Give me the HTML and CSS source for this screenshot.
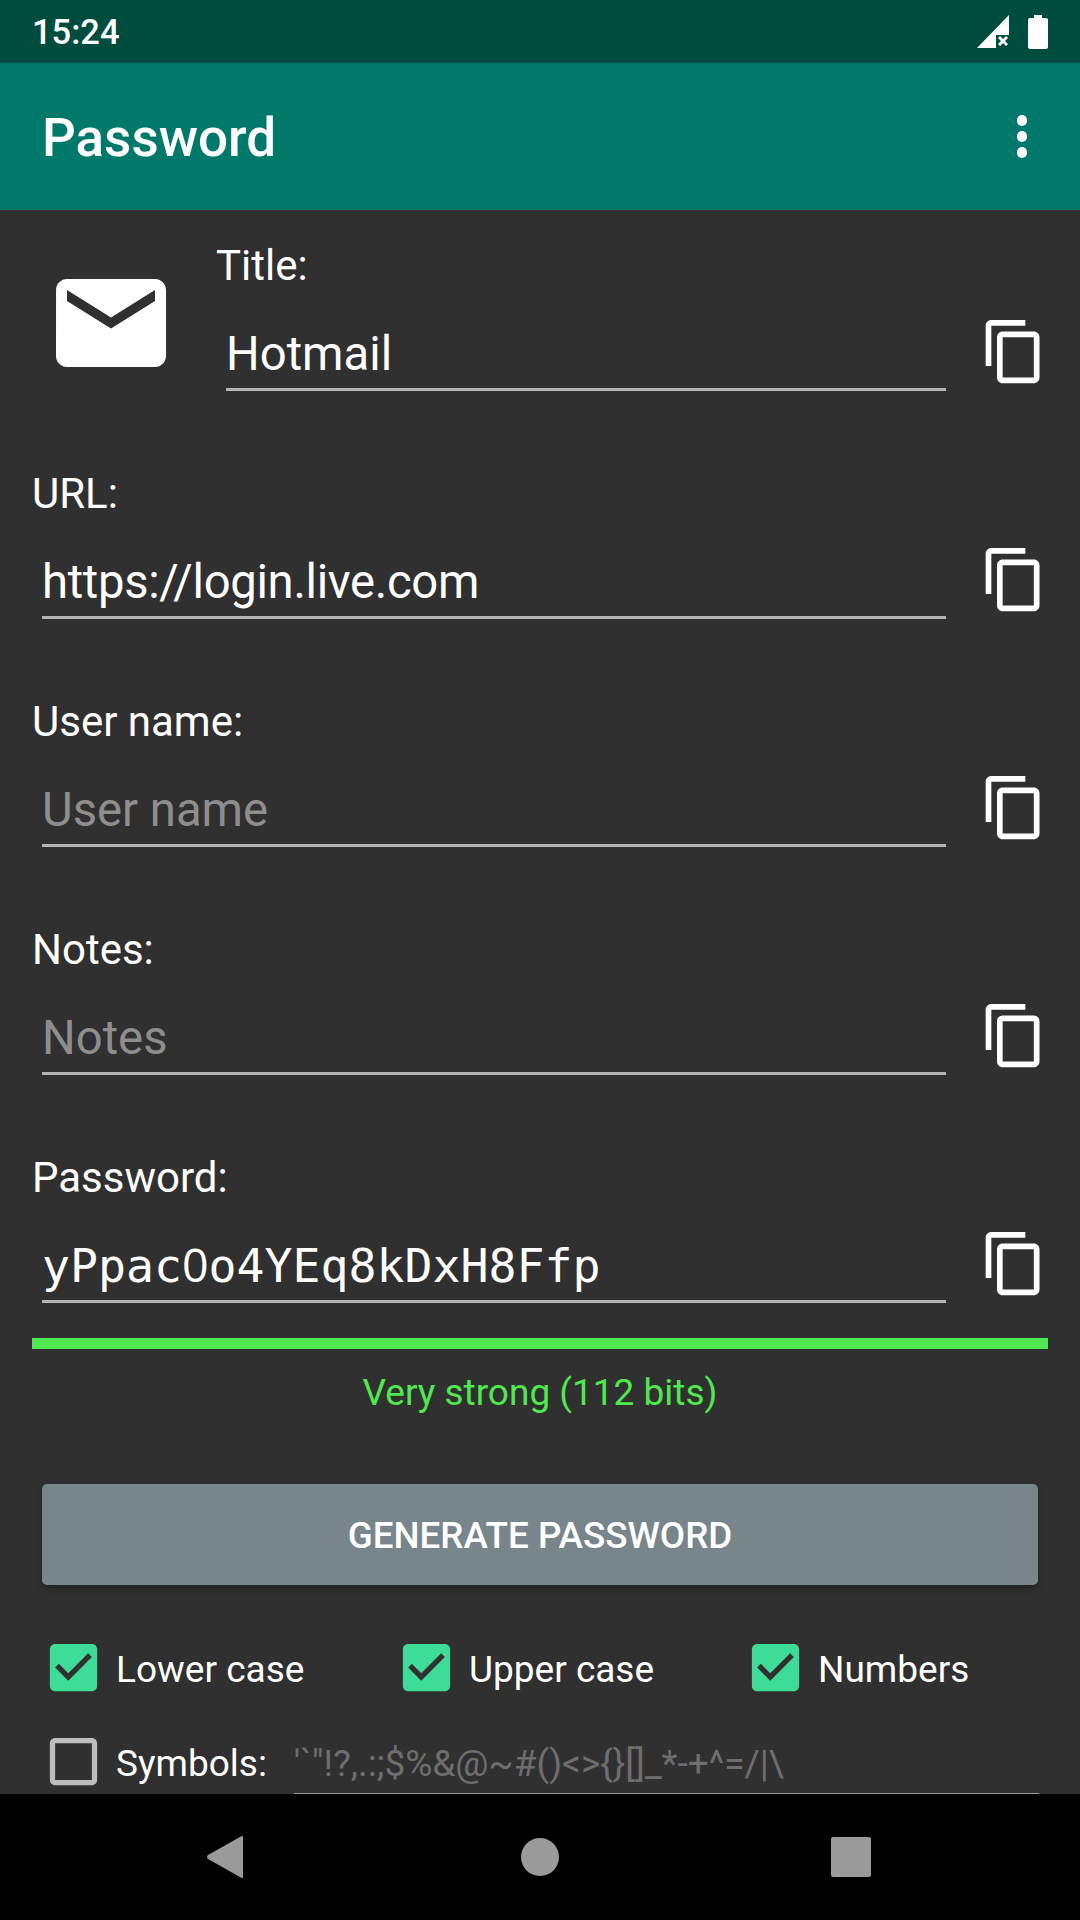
FILE: index.html
```html
<!DOCTYPE html>
<html lang="en">
<head>
    <meta charset="UTF-8">
    <meta name="viewport" content="width=device-width, initial-scale=1.0">
    <title>Password</title>
    <link rel="stylesheet" href="styles.css">
</head>
<body>
    <svg class="icon-defs" width="0" height="0">
        <symbol id="copy" viewBox="0 0 24 24" preserveAspectRatio="none">
            <path d="M16 1H4c-1.1 0-2 .9-2 2v14h2V3h12V1zm3 4H8c-1.1 0-2 .9-2 2v14c0 1.1.9 2 2 2h11c1.1 0 2-.9 2-2V7c0-1.1-.9-2-2-2zm0 16H8V7h11v14z"/>
        </symbol>
        <symbol id="checked" viewBox="0 0 24 24">
            <path d="M19 3H5c-1.11 0-2 .9-2 2v14c0 1.1.89 2 2 2h14c1.11 0 2-.9 2-2V5c0-1.11-.89-2-2-2zm-9 14l-5-5 1.41-1.41L10 14.17l7.59-7.59L19 8l-9 9z"/>
        </symbol>
        <symbol id="unchecked" viewBox="0 0 24 24">
            <path d="M19 5v14H5V5h14m0-2H5c-1.1 0-2 .9-2 2v14c0 1.1.9 2 2 2h14c1.1 0 2-.9 2-2V5c0-1.1-.9-2-2-2z"/>
        </symbol>
    </svg>

    <div class="status-bar">
        <span class="status-time">15:24</span>
        <div class="status-icons">
            <svg class="signal-icon" viewBox="0 0 32 33">
                <path d="M32 0V20H19V33H0z"/>
                <path d="M21 23l2-2 3 3 3-3 2 2-3 3 3 3-2 2-3-3-3 3-2-2 3-3z"/>
            </svg>
            <svg class="battery-icon" viewBox="0 0 20 34">
                <path d="M6 0h8v3h4c1.1 0 2 .9 2 2v27c0 1.1-.9 2-2 2H2c-1.1 0-2-.9-2-2V5c0-1.1.9-2 2-2h4z"/>
            </svg>
        </div>
    </div>

    <div class="app-bar">
        <h1>Password</h1>
        <div class="overflow-menu">
            <span></span>
            <span></span>
            <span></span>
        </div>
    </div>

    <div class="content">
        <div class="title-row">
            <svg class="mail-icon" viewBox="0 0 24 24">
                <path d="M20 4H4c-1.1 0-1.99.9-1.99 2L2 18c0 1.1.9 2 2 2h16c1.1 0 2-.9 2-2V6c0-1.1-.9-2-2-2zm0 4l-8 5-8-5V6l8 5 8-5v2z"/>
            </svg>
            <div class="field">
                <div class="field-label">Title:</div>
                <div class="field-body">
                    <div class="field-input">Hotmail</div>
                    <svg class="copy-icon"><use href="#copy"/></svg>
                </div>
            </div>
        </div>

        <div class="field">
            <div class="field-label">URL:</div>
            <div class="field-body">
                <div class="field-input url">https://login.live.com</div>
                <svg class="copy-icon"><use href="#copy"/></svg>
            </div>
        </div>

        <div class="field">
            <div class="field-label">User name:</div>
            <div class="field-body">
                <div class="field-input empty">User name</div>
                <svg class="copy-icon"><use href="#copy"/></svg>
            </div>
        </div>

        <div class="field">
            <div class="field-label">Notes:</div>
            <div class="field-body">
                <div class="field-input empty">Notes</div>
                <svg class="copy-icon"><use href="#copy"/></svg>
            </div>
        </div>

        <div class="field password-field">
            <div class="field-label">Password:</div>
            <div class="field-body">
                <div class="field-input mono">yPpac<span class="plain-zero">0</span>o4YEq8kDxH8Ffp</div>
                <svg class="copy-icon"><use href="#copy"/></svg>
            </div>
        </div>

        <div class="strength-bar"></div>
        <div class="strength-text">Very strong (112 bits)</div>

        <button class="generate-btn">GENERATE PASSWORD</button>

        <div class="options">
            <div class="option">
                <svg class="check-icon on"><use href="#checked"/></svg>
                <span>Lower case</span>
            </div>
            <div class="option">
                <svg class="check-icon on"><use href="#checked"/></svg>
                <span>Upper case</span>
            </div>
            <div class="option">
                <svg class="check-icon on"><use href="#checked"/></svg>
                <span>Numbers</span>
            </div>
        </div>

        <div class="symbols-row">
            <div class="option">
                <svg class="check-icon off"><use href="#unchecked"/></svg>
                <span>Symbols:</span>
            </div>
            <div class="symbols-input">'`"!?,.:;$%&amp;@~#()&lt;&gt;{}[]_*-+^=/|\</div>
        </div>
    </div>

    <div class="nav-bar">
        <svg class="nav-back" viewBox="0 0 36 42">
            <path d="M35 0c.6 0 1 .4 1 1v40c0 .6-.4 1-1 1-.3 0-.5-.1-.7-.3L1 23c-1.300-1-1.300-3 0-4L34.300.3c.2-.2.4-.3.7-.3z"/>
        </svg>
        <div class="nav-home"></div>
        <div class="nav-recent"></div>
    </div>
</body>
</html>
```

FILE: styles.css
```css
html, body {
    margin: 0;
    padding: 0;
}
body {
    width: 1080px;
    height: 1920px;
    display: flex;
    flex-direction: column;
    overflow: hidden;
    font-family: Roboto, "Liberation Sans", sans-serif;
    color: white;
    background: #303030;
}
.icon-defs {
    position: absolute;
}
.status-bar {
    height: 63px;
    flex: none;
    display: flex;
    justify-content: space-between;
    align-items: center;
    padding: 0 32px;
    background: #004d40;
}
.status-time {
    font-size: 34.5px;
    font-weight: 500;
}
.status-icons {
    display: flex;
    align-items: center;
    gap: 19px;
}
.signal-icon {
    width: 32px;
    height: 33px;
    fill: white;
}
.battery-icon {
    width: 20px;
    height: 34px;
    fill: white;
}
.app-bar {
    height: 147px;
    flex: none;
    display: flex;
    justify-content: space-between;
    align-items: center;
    padding: 2px 53px 0 42px;
    box-sizing: border-box;
    background: #00796b;
}
.app-bar h1 {
    margin: 0;
    font-size: 53px;
    font-weight: 500;
}
.overflow-menu {
    display: flex;
    flex-direction: column;
    gap: 5.5px;
    margin-top: -2px;
}
.overflow-menu span {
    width: 10.500px;
    height: 10.500px;
    border-radius: 50%;
    background: white;
}
.content {
    flex: 1;
    min-height: 0;
    overflow: hidden;
    padding: 35px 32px 0;
}
.title-row {
    display: flex;
}
.mail-icon {
    width: 132px;
    height: 132px;
    flex: none;
    margin: 12px 39px 0 13px;
    fill: white;
}
.title-row .field {
    flex: 1;
    min-width: 0;
}
.field {
    margin-bottom: 82px;
}
.field-label {
    height: 44px;
    font-size: 42px;
    line-height: 42px;
}
.field-body {
    display: flex;
    align-items: flex-end;
    height: 102px;
}
.field-input {
    flex: 1;
    min-width: 0;
    margin-left: 10px;
    padding-bottom: 6px;
    font-size: 47.25px;
    line-height: 56px;
    border-bottom: 3px solid #b4b4b4;
}
.field-input.url {
    letter-spacing: -0.33px;
}
.field-input.empty {
    color: #8e8e8e;
}
.field-input.mono {
    font-family: "DejaVu Sans Mono", "Liberation Mono", monospace;
    font-size: 46.5px;
}
/* droid mono has an open zero, dejavu doesn't */
.plain-zero {
    display: inline-block;
    width: 1ch;
    text-align: center;
    font-family: "Open Sans", sans-serif;
}
.copy-icon {
    width: 68px;
    height: 69px;
    flex: none;
    margin: 0 0 5px 34px;
    fill: white;
}
.password-field {
    margin-bottom: 35px;
}
.strength-bar {
    height: 11px;
    background: #50e850;
}
.strength-text {
    margin-top: 22px;
    font-size: 37px;
    line-height: 44px;
    text-align: center;
    color: #50e850;
}
.generate-btn {
    display: block;
    width: 996px;
    height: 101px;
    margin: 69px 0 0 10px;
    padding: 2px 0 0;
    border: none;
    border-radius: 5px;
    font-family: inherit;
    font-size: 36.75px;
    font-weight: 500;
    color: white;
    background: #78858a;
    box-shadow: 0 3px 6px rgba(0, 0, 0, 0.3);
}
.options {
    display: grid;
    grid-template-columns: 353px 349px 1fr;
    margin: 51px 0 0 10px;
}
.option {
    display: flex;
    align-items: center;
    gap: 11px;
    font-size: 37px;
}
.option span {
    padding-top: 3px;
}
.check-icon {
    width: 63px;
    height: 63px;
    flex: none;
}
.check-icon.on {
    fill: #3ddc97;
}
.check-icon.off {
    fill: #bdbdbd;
}
.symbols-row {
    display: flex;
    align-items: flex-start;
    margin: 31px 0 0 10px;
}
.symbols-input {
    width: 745px;
    height: 51px;
    margin-left: 27px;
    padding-top: 12px;
    font-size: 37px;
    line-height: 44px;
    color: #6e6e6e;
    border-bottom: 1px solid #9a9a9a;
}
.nav-bar {
    height: 126px;
    flex: none;
    display: grid;
    grid-template-columns: 207px 36px 278px 38px 272px 40px;
    align-items: center;
    background: black;
}
.nav-back {
    grid-column: 2;
    width: 36px;
    height: 42px;
    fill: #9a9a9a;
}
.nav-home {
    grid-column: 4;
    width: 38px;
    height: 38px;
    border-radius: 50%;
    background: #9a9a9a;
}
.nav-recent {
    grid-column: 6;
    width: 40px;
    height: 40px;
    border-radius: 2px;
    background: #9a9a9a;
}
```
